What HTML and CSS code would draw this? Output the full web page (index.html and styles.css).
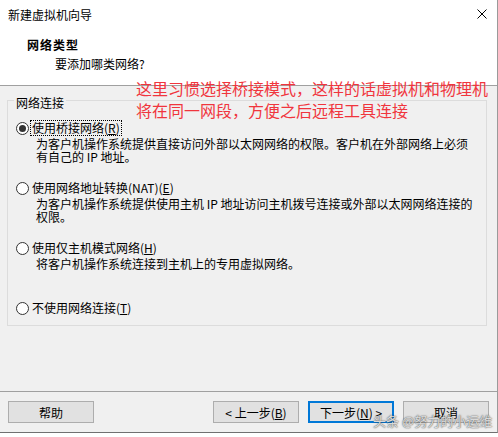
FILE: index.html
```html
<!DOCTYPE html>
<html lang="zh-CN">
<head>
    <meta charset="UTF-8">
    <title>新建虚拟机向导</title>
    <link rel="stylesheet" href="styles.css">
</head>
<body>
    <div class="window">
        <!-- Title bar -->
        <div class="titlebar">
            <span class="title">新建虚拟机向导</span>
            <svg class="close" width="10" height="10" viewBox="0 0 10 10">
                <path d="M0.5 0.5 L9.5 9.5 M9.5 0.5 L0.5 9.5" stroke="#000" stroke-width="1" fill="none"/>
            </svg>
        </div>

        <!-- Page header -->
        <div class="header">
            <div class="heading">网络类型</div>
            <div class="subheading">要添加哪类网络?</div>
        </div>

        <div class="content">
            <fieldset class="group">
                <legend>网络连接</legend>

                <div class="option">
                    <div class="option-row">
                        <span class="radio checked"></span>
                        <span class="option-label focused">使用桥接网络(<u>R</u>)</span>
                    </div>
                    <p class="option-desc">为客户机操作系统提供直接访问外部以太网网络的权限。客户机在外部网络上必须<br>有自己的 IP 地址。</p>
                </div>

                <div class="option">
                    <div class="option-row">
                        <span class="radio"></span>
                        <span class="option-label">使用网络地址转换(NAT)(<u>E</u>)</span>
                    </div>
                    <p class="option-desc">为客户机操作系统提供使用主机 IP 地址访问主机拨号连接或外部以太网网络连接的<br>权限。</p>
                </div>

                <div class="option">
                    <div class="option-row">
                        <span class="radio"></span>
                        <span class="option-label">使用仅主机模式网络(<u>H</u>)</span>
                    </div>
                    <p class="option-desc">将客户机操作系统连接到主机上的专用虚拟网络。</p>
                </div>

                <div class="option">
                    <div class="option-row">
                        <span class="radio"></span>
                        <span class="option-label">不使用网络连接(<u>T</u>)</span>
                    </div>
                </div>
            </fieldset>

            <!-- Wizard buttons -->
            <div class="footer">
                <button class="btn btn-help">帮助</button>
                <button class="btn">&lt; 上一步(<u>B</u>)</button>
                <button class="btn btn-default">下一步(<u>N</u>) &gt;</button>
                <button class="btn">取消</button>
            </div>
        </div>

        <!-- Annotation laid over the dialog -->
        <div class="note">这里习惯选择桥接模式，这样的话虚拟机和物理机<br>将在同一网段，方便之后远程工具连接</div>
        <div class="watermark">头条 @努力的小运维</div>
    </div>
</body>
</html>
```

FILE: styles.css
```css
body {
    margin: 0;
    background-color: #fff;
    font-family: "Noto Sans CJK SC", sans-serif;
    font-size: 12px;
    color: #000;
}
.window {
    position: relative;
    width: 497px;
    background-color: #fff;
    border-right: 1px solid #9a9a9a;
    border-bottom: 1px solid #707070;
}
.titlebar {
    display: flex;
    justify-content: space-between;
    align-items: flex-start;
    height: 30px;
    padding-left: 8px;
    line-height: 30px;
}
.close {
    margin-top: 9px;
    margin-right: 10px;
}
.header {
    padding: 8px 0 14px 0;
    border-bottom: 1px solid #a0a0a0;
    line-height: 14px;
}
.heading {
    padding-left: 27px;
    font-weight: bold;
    letter-spacing: 1px;
}
.subheading {
    margin-top: 5px;
    padding-left: 55px;
}
.content {
    display: flex;
    flex-direction: column;
    height: 346px;
    background-color: #f0f0f0;
}
.group {
    box-sizing: border-box;
    width: 480px;
    height: 235px;
    margin: 5px 0 0 7px;
    padding: 12px 8px 0 8px;
    border: 1px solid #dcdcdc;
    min-inline-size: 0;
}
.group legend {
    padding: 6px 2px 0 2px;
    margin-left: -2px;
    line-height: 12px;
}
.option {
    height: 60px;
}
.option:last-child {
    height: auto;
}
.option-row {
    display: flex;
    align-items: center;
    height: 14px;
    line-height: 14px;
}
.radio {
    position: relative;
    box-sizing: border-box;
    width: 13px;
    height: 13px;
    margin-right: 2px;
    border: 1px solid #333;
    border-radius: 50%;
    background-color: #fff;
}
.radio.checked::after {
    content: "";
    position: absolute;
    left: 2px;
    top: 2px;
    width: 7px;
    height: 7px;
    border-radius: 50%;
    background-color: #333;
}
.option-label {
    padding: 0 1px;
}
.option-label.focused {
    outline: 1px dotted #000;
}
.option-desc {
    margin: 2px 0 0 20px;
    line-height: 13px;
}
.footer {
    display: flex;
    gap: 9px;
    margin-top: auto;
    padding: 9px 8px;
    border-top: 1px solid #a0a0a0;
}
.btn {
    box-sizing: border-box;
    width: 86px;
    height: 22px;
    padding: 0;
    border: 1px solid #adadad;
    background-color: #e1e1e1;
    font-family: inherit;
    font-size: 12px;
    color: #000;
}
.btn-help {
    margin-right: auto;
}
.btn-default {
    border: 2px solid #0078d7;
}
.note {
    position: absolute;
    left: 136px;
    top: 77px;
    font-size: 16px;
    line-height: 22px;
    color: #f0353d;
    white-space: nowrap;
}
.watermark {
    position: absolute;
    left: 373px;
    top: 413px;
    font-size: 13px;
    line-height: 16px;
    color: rgba(235, 235, 235, 0.9);
    text-shadow: 0 0 1px #555, 0 0 2px rgba(0, 0, 0, 0.5);
    white-space: nowrap;
}
```
